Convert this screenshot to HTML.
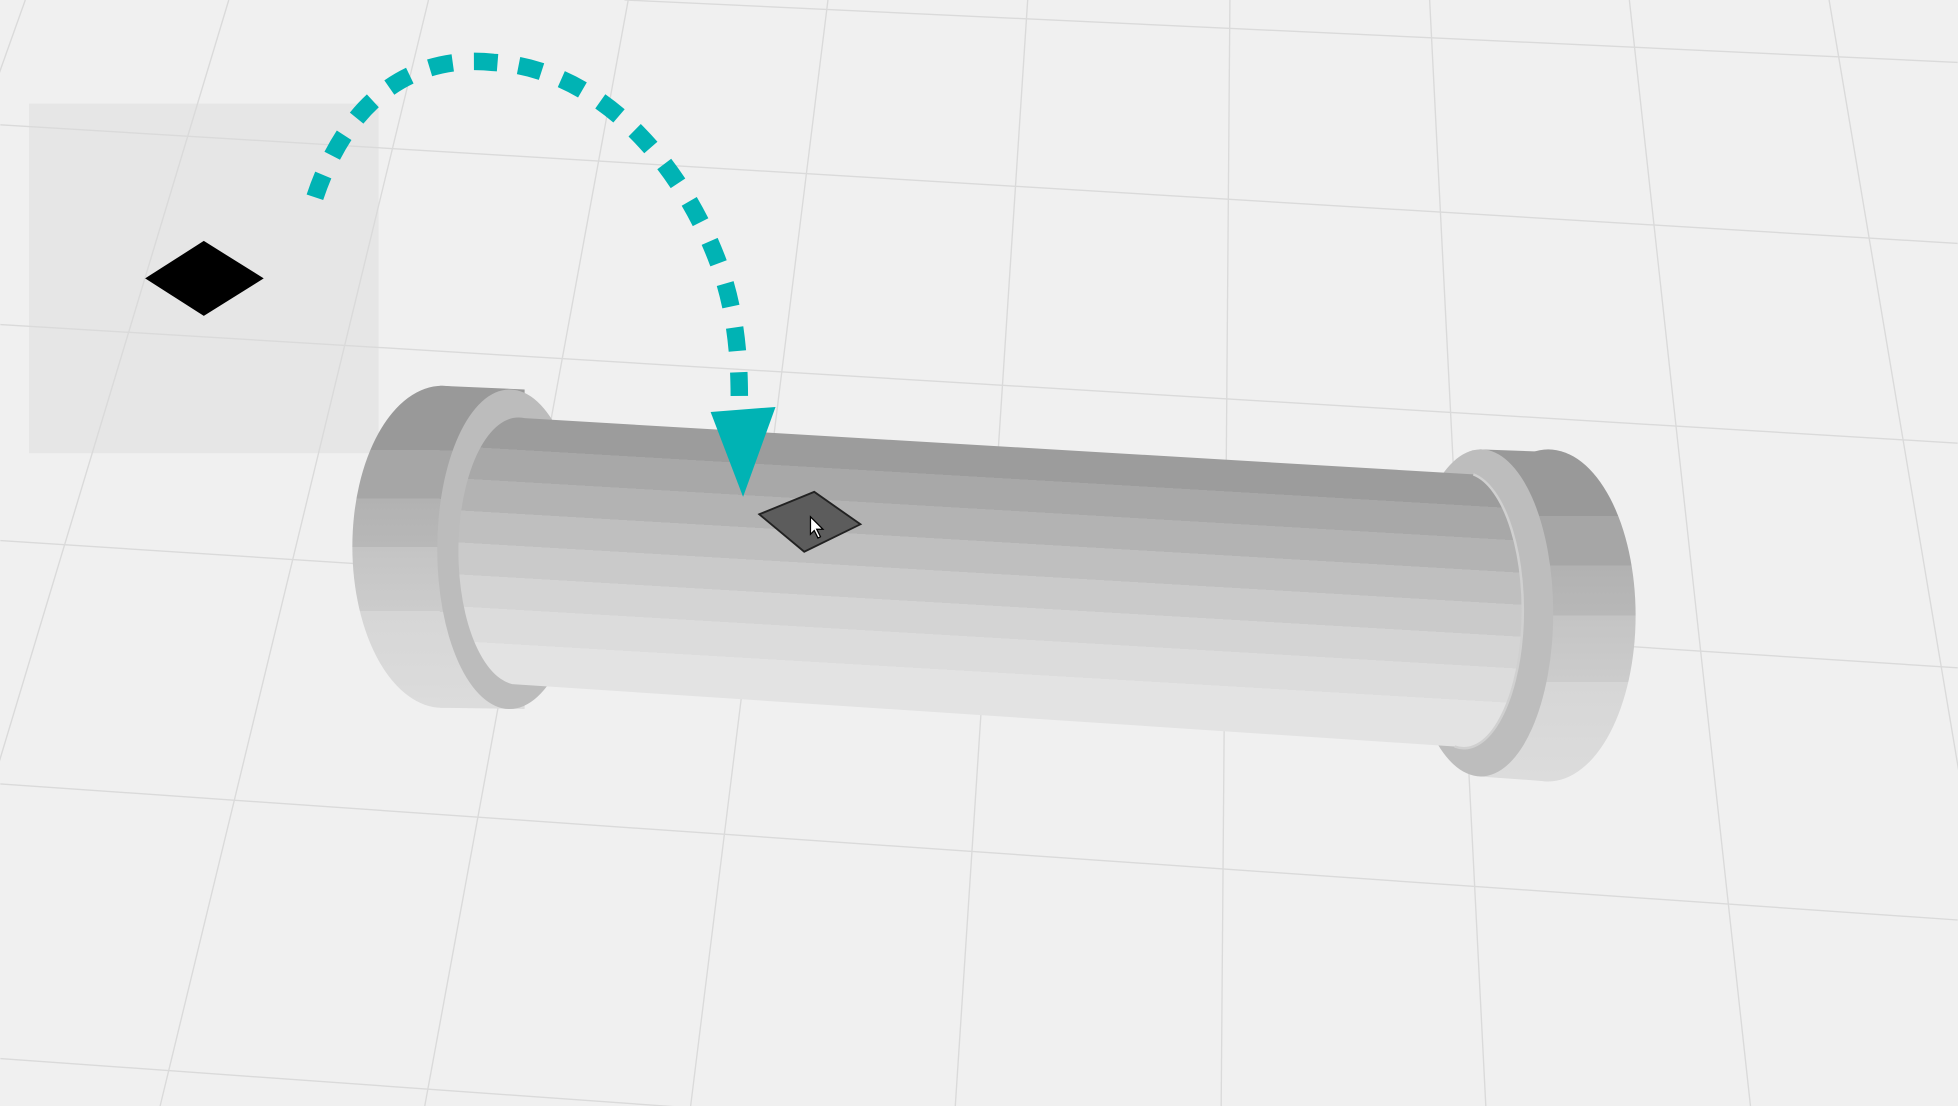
<!DOCTYPE html>
<html><head><style>html,body{margin:0;padding:0;background:#f0f0f0;overflow:hidden;width:1958px;height:1106px}svg{display:block;overflow:hidden}</style></head>
<body>
<svg width="1958" height="1106" viewBox="0 0 1568 886" xmlns="http://www.w3.org/2000/svg">
<defs>
<linearGradient id="body" gradientUnits="userSpaceOnUse" x1="420" y1="335" x2="407.5" y2="548">
<stop offset="0" stop-color="#9c9c9c"/><stop offset="0.12" stop-color="#9c9c9c"/>
<stop offset="0.12" stop-color="#a8a8a8"/><stop offset="0.24" stop-color="#a8a8a8"/>
<stop offset="0.24" stop-color="#b3b3b3"/><stop offset="0.36" stop-color="#b3b3b3"/>
<stop offset="0.36" stop-color="#bfbfbf"/><stop offset="0.48" stop-color="#bfbfbf"/>
<stop offset="0.48" stop-color="#cacaca"/><stop offset="0.6" stop-color="#cacaca"/>
<stop offset="0.6" stop-color="#d4d4d4"/><stop offset="0.72" stop-color="#d4d4d4"/>
<stop offset="0.72" stop-color="#dcdcdc"/><stop offset="0.85" stop-color="#dcdcdc"/>
<stop offset="0.85" stop-color="#e3e3e3"/><stop offset="1" stop-color="#e3e3e3"/>
</linearGradient>
<linearGradient id="cap" x1="0" y1="0" x2="0" y2="1">
<stop offset="0" stop-color="#999"/><stop offset="0.2" stop-color="#999"/>
<stop offset="0.2" stop-color="#a6a6a6"/><stop offset="0.35" stop-color="#a6a6a6"/>
<stop offset="0.35" stop-color="#b2b2b2"/><stop offset="0.5" stop-color="#b8b8b8"/>
<stop offset="0.5" stop-color="#c4c4c4"/><stop offset="0.7" stop-color="#cccccc"/>
<stop offset="0.7" stop-color="#d6d6d6"/><stop offset="1" stop-color="#dcdcdc"/>
</linearGradient>
</defs>
<rect width="1568" height="886" fill="#f0f0f0"/>
<rect x="23" y="83" width="280" height="280" fill="#e6e6e6"/>
<g stroke="#dadada" stroke-width="1.1" fill="none">
<line x1="500" y1="0" x2="1568" y2="50"/>
<line x1="0" y1="100" x2="1568" y2="195"/>
<line x1="0" y1="260" x2="1568" y2="355"/>
<line x1="0" y1="433" x2="1568" y2="535"/>
<line x1="0" y1="628" x2="1568" y2="737"/>
<line x1="0" y1="848" x2="1568" y2="960"/>
<line x1="20" y1="0" x2="-296" y2="886"/>
<line x1="183" y1="0" x2="-84" y2="886"/>
<line x1="343" y1="0" x2="128" y2="886"/>
<line x1="503" y1="0" x2="340" y2="886"/>
<line x1="663" y1="0" x2="553" y2="886"/>
<line x1="823" y1="0" x2="765" y2="886"/>
<line x1="985" y1="0" x2="978" y2="886"/>
<line x1="1145" y1="0" x2="1190" y2="886"/>
<line x1="1305" y1="0" x2="1402" y2="886"/>
<line x1="1465" y1="0" x2="1614" y2="886"/>
</g>
<polygon points="116,223 163,193 211,223 163,253" fill="#000"/>
<!-- left cap -->
<ellipse cx="354" cy="438" rx="72" ry="129" fill="url(#cap)"/>
<path d="M352 309 L420 312 L420 568 L352 567 Z" fill="url(#cap)"/>
<ellipse cx="408" cy="440" rx="58" ry="128" fill="#bcbcbc"/>
<!-- right cap -->
<ellipse cx="1240" cy="493" rx="70" ry="133" fill="url(#cap)"/>
<path d="M1185 360 L1240 362 L1240 626 L1185 622 Z" fill="url(#cap)"/>
<ellipse cx="1186" cy="491" rx="58" ry="131" fill="#bdbdbd"/>
<!-- body -->
<path d="M420 335 L1180 380 A47 110 0 0 1 1165 598 L410 548 A48 107 0 0 1 420 335 Z" fill="url(#body)"/>
<path d="M1180 380 A47 110 0 0 1 1165 598" fill="none" stroke="#d0d0d0" stroke-width="2"/>
<!-- dashed arc -->
<path d="M252 158 C285 60 350 45 395 50 C480 55 545 130 575 210 C590 250 592 290 592 320" fill="none" stroke="#00b3b4" stroke-width="14" stroke-dasharray="19 17"/>
<polygon points="569,330 621,326 595,398" fill="#00b3b4"/>
<polygon points="608,412 652,394 689,420 644,442" fill="#5c5c5c" stroke="#222" stroke-width="1.5"/>
<path d="M649 414 L649 428 L652 425 L655 431 L657 430 L654 424 L659 424 Z" fill="#fff" stroke="#000" stroke-width="1"/>
</svg>
</body></html>
